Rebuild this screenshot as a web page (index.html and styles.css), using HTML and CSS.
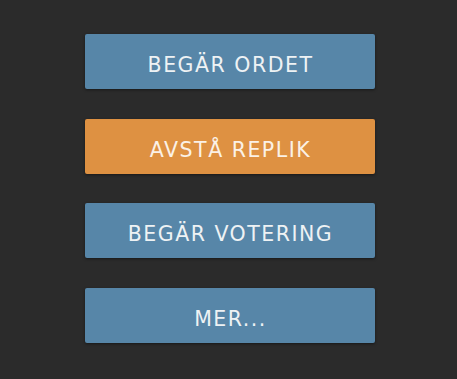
FILE: index.html
```html
<!DOCTYPE html>
<html lang="sv">
<head>
<meta charset="utf-8">
<link rel="stylesheet" href="styles.css">
</head>
<body>
<div class="menu">
  <button class="btn btn-blue">BEGÄR ORDET</button>
  <button class="btn btn-orange">AVSTÅ REPLIK</button>
  <button class="btn btn-blue">BEGÄR VOTERING</button>
  <button class="btn btn-blue">MER...</button>
</div>
</body>
</html>
```
FILE: styles.css
```css
html, body {
  margin: 0;
  padding: 0;
  background: #2b2b2b;
  width: 457px;
  height: 379px;
  overflow: hidden;
}
.menu {
  display: flex;
  flex-direction: column;
  align-items: center;
  padding-top: 34px;
  padding-left: 2px;
  gap: 29.5px;
}
.btn {
  width: 290px;
  height: 55px;
  border: none;
  border-radius: 2px;
  font-family: "DejaVu Sans", "Noto Sans", sans-serif;
  font-size: 20.5px;
  font-weight: 400;
  letter-spacing: 1.5px;
  color: #eef2f4;
  box-shadow: 0 1px 3px rgba(0,0,0,0.45);
  cursor: pointer;
  padding: 7px 0 0 2px;
}
.btn-blue {
  background: #5786a8;
}
.btn-orange {
  background: #de9142;
  color: #fbf1e6;
}
```
